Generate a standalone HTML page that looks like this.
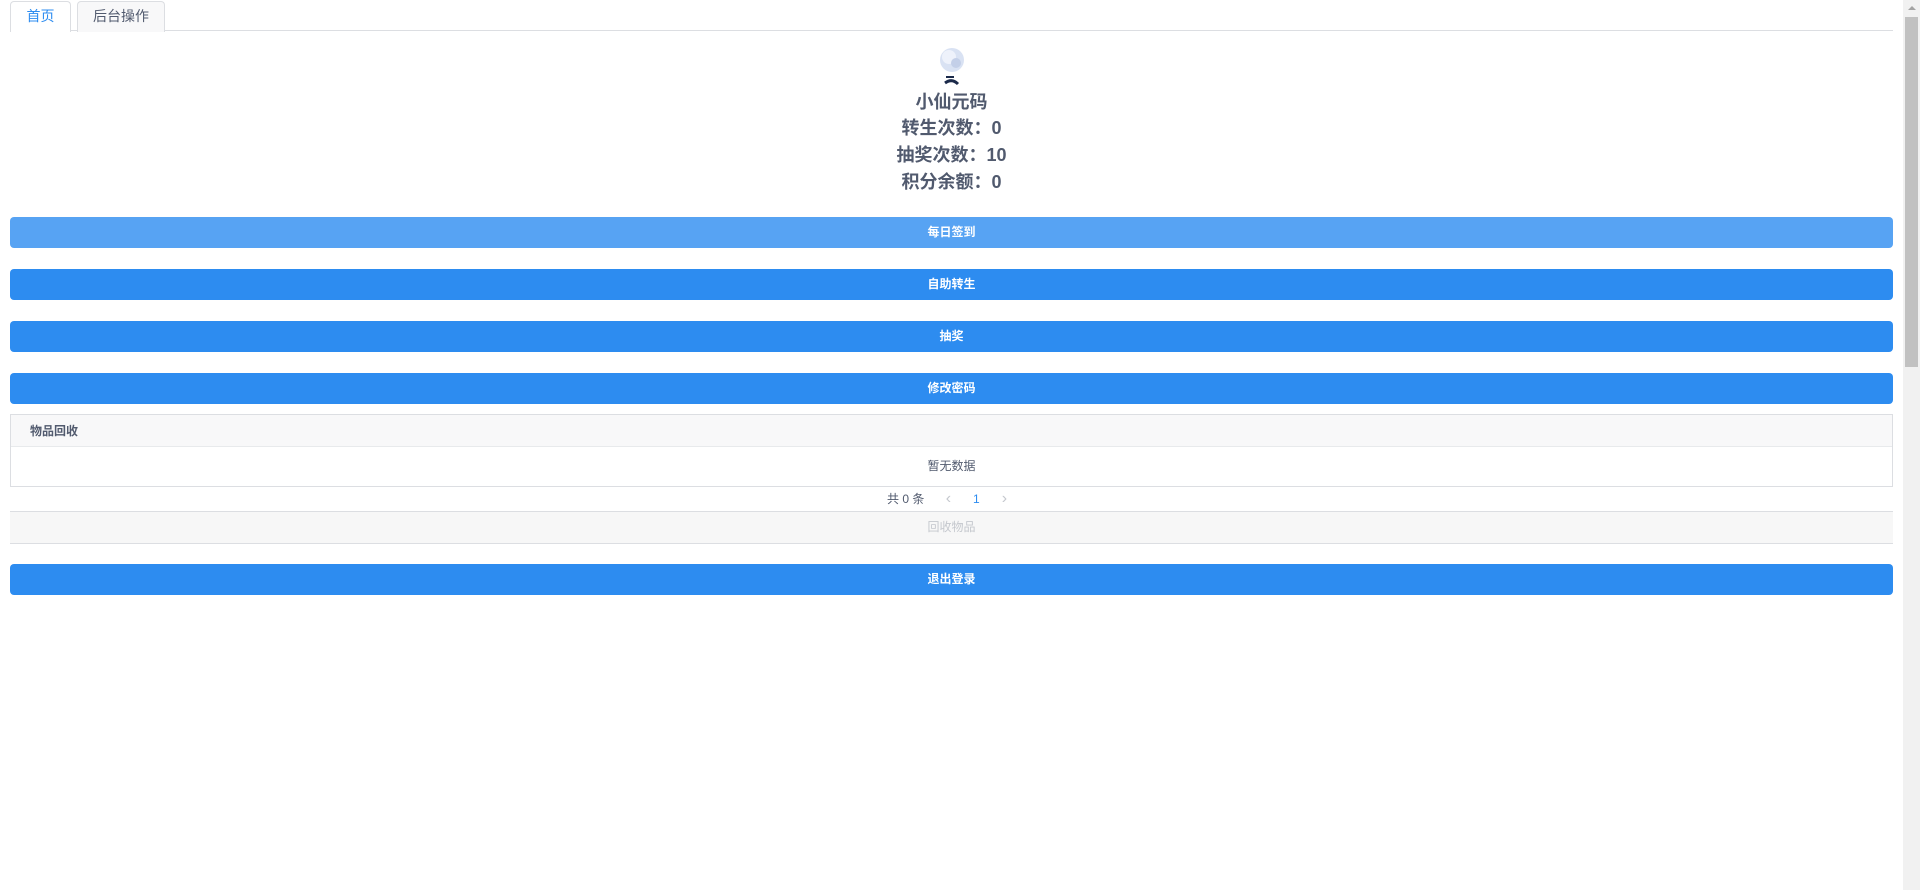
<!DOCTYPE html>
<html><head><meta charset="utf-8"><style>
*{box-sizing:border-box;margin:0;padding:0}
body{width:1920px;height:890px;overflow:hidden;background:#fff;font-family:"Liberation Sans","Noto Sans CJK SC",sans-serif;color:#515a6e;position:relative}
.tabs{position:absolute;left:10px;top:0;width:1883px;height:31px;border-bottom:1px solid #dcdee2}
.tab{position:absolute;top:1px;height:31px;border:1px solid #dcdee2;border-bottom:none;border-radius:4px 4px 0 0;font-size:14px;line-height:29px;text-align:center}
.t1{left:0;width:61px;background:#fff;color:#2d8cf0;height:31px}
.t2{left:67px;width:88px;background:#f8f8f9;color:#515a6e}
.info{position:absolute;left:10px;width:1883px;text-align:center;font-size:18px;font-weight:bold;color:#515a6e}
.btn{position:absolute;left:10px;width:1883px;height:31px;border-radius:4px;background:#2d8cf0;color:#fff;font-size:12px;font-weight:bold;text-align:center;line-height:31px}
.sb{position:absolute;right:0;top:0;width:17px;height:890px;background:#f1f1f1}
.thumb{position:absolute;left:2px;top:17px;width:13px;height:350px;background:#c1c1c1}
</style></head><body>
<div class="tabs"><div class="tab t1">首页</div><div class="tab t2">后台操作</div></div>
<svg style="position:absolute;left:936px;top:46px" width="32" height="44" viewBox="0 0 32 44">
<circle cx="16" cy="14" r="12" fill="#d9e2f3"/><circle cx="13" cy="11" r="7" fill="#eef2fb"/><circle cx="20" cy="17" r="5" fill="#c3cfe8"/>
<path d="M10 31 L18 31" stroke="#1b2a4a" stroke-width="2"/><path d="M9 37 Q16 32 22 38" stroke="#1b2a4a" stroke-width="3" fill="none"/>
</svg>
<div class="info" style="top:89px;line-height:26px">小仙元码</div>
<div class="info" style="top:115px;line-height:27px">转生次数：0</div>
<div class="info" style="top:142px;line-height:27px">抽奖次数：10</div>
<div class="info" style="top:169px;line-height:27px">积分余额：0</div>
<div class="btn" style="top:217px;background:#57a3f3">每日签到</div>
<div class="btn" style="top:269px">自助转生</div>
<div class="btn" style="top:321px">抽奖</div>
<div class="btn" style="top:373px">修改密码</div>
<div style="position:absolute;left:10px;top:414px;width:1883px;height:73px;border:1px solid #dcdee2">
<div style="height:32px;background:#f8f8f9;border-bottom:1px solid #e8eaec;font-size:12px;font-weight:bold;line-height:32px;padding-left:19px;color:#515a6e">物品回收</div>
<div style="text-align:center;font-size:12px;line-height:39px;color:#515a6e">暂无数据</div>
</div>
<div style="position:absolute;left:887px;top:490px;font-size:12px;line-height:18px;color:#515a6e">共 0 条 <span style="color:#c5c8ce;margin-left:18px;font-size:16px">‹</span><span style="color:#2d8cf0;margin-left:22px">1</span><span style="color:#c5c8ce;margin-left:22px;font-size:16px">›</span></div>
<div style="position:absolute;left:10px;top:511px;width:1883px;height:33px;background:#f7f7f7;border-top:1px solid #dcdee2;border-bottom:1px solid #dcdee2;text-align:center;font-size:12px;line-height:31px;color:#c5c8ce">回收物品</div>
<div class="btn" style="top:564px">退出登录</div>
<div class="sb"><div class="thumb"></div><div style="position:absolute;left:5px;top:6px;border-left:4px solid transparent;border-right:4px solid transparent;border-bottom:4px solid #a3a3a3"></div></div>
</body></html>
